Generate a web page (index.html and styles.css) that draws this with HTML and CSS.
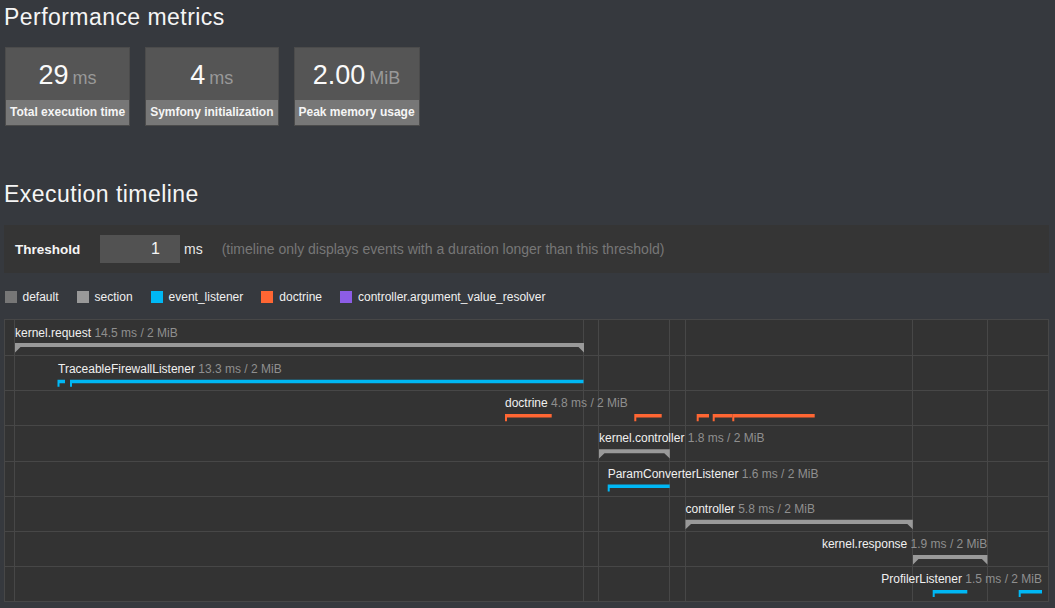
FILE: index.html
```html
<!DOCTYPE html>
<html lang="en">
<head>
<meta charset="utf-8">
<title>Performance metrics</title>
<link rel="stylesheet" href="styles.css">
</head>
<body>
<div class="page">
  <h2 class="title title-metrics">Performance metrics</h2>
  <div class="metrics">
    <div class="metric">
      <span class="value">29<span class="unit">ms</span></span>
      <span class="label">Total execution time</span>
    </div>
    <div class="metric">
      <span class="value">4<span class="unit">ms</span></span>
      <span class="label">Symfony initialization</span>
    </div>
    <div class="metric">
      <span class="value">2.00<span class="unit">MiB</span></span>
      <span class="label">Peak memory usage</span>
    </div>
  </div>

  <h2 class="title title-timeline">Execution timeline</h2>
  <form class="threshold">
    <label class="th-label" for="threshold">Threshold</label>
    <input class="th-input" id="threshold" type="text" value="1">
    <span class="th-unit">ms</span>
    <span class="th-help">(timeline only displays events with a duration longer than this threshold)</span>
  </form>

  <ul class="legend">
    <li class="legend-item"><span class="swatch sw-default"></span>default</li>
    <li class="legend-item"><span class="swatch sw-section"></span>section</li>
    <li class="legend-item"><span class="swatch sw-event"></span>event_listener</li>
    <li class="legend-item"><span class="swatch sw-doctrine"></span>doctrine</li>
    <li class="legend-item"><span class="swatch sw-resolver"></span>controller.argument_value_resolver</li>
  </ul>

  <svg class="timeline" width="1045" height="284" viewBox="4 319 1045 284" xmlns="http://www.w3.org/2000/svg">
    <rect class="tl-bg" x="4.5" y="319.5" width="1044" height="282"/>
    <g class="tl-grid">
      <line x1="4" y1="355.5" x2="1049" y2="355.5"/>
      <line x1="4" y1="390.5" x2="1049" y2="390.5"/>
      <line x1="4" y1="425.5" x2="1049" y2="425.5"/>
      <line x1="4" y1="461.5" x2="1049" y2="461.5"/>
      <line x1="4" y1="496.5" x2="1049" y2="496.5"/>
      <line x1="4" y1="531.5" x2="1049" y2="531.5"/>
      <line x1="4" y1="566.5" x2="1049" y2="566.5"/>
      <line x1="14.5" y1="319" x2="14.5" y2="602"/>
      <line x1="583.5" y1="319" x2="583.5" y2="602"/>
      <line x1="598.5" y1="319" x2="598.5" y2="602"/>
      <line x1="669.5" y1="319" x2="669.5" y2="602"/>
      <line x1="685.5" y1="319" x2="685.5" y2="602"/>
      <line x1="912.5" y1="319" x2="912.5" y2="602"/>
      <line x1="987.5" y1="319" x2="987.5" y2="602"/>
    </g>

    <!-- row 1: kernel.request -->
    <text class="tl-text" x="15" y="336.5"><tspan class="tl-name">kernel.request</tspan><tspan class="tl-dur"> 14.5 ms / 2 MiB</tspan></text>
    <polygon class="tl-section" points="15,343 584,343 584,352.5 578.5,347 20.5,347 15,352.5"/>

    <!-- row 2: TraceableFirewallListener -->
    <text class="tl-text" x="58" y="372.5"><tspan class="tl-name">TraceableFirewallListener</tspan><tspan class="tl-dur"> 13.3 ms / 2 MiB</tspan></text>
    <path class="tl-event" d="M57.5 379.7 H65 V383.3 H59.5 V386.8 H57.5 Z"/>
    <path class="tl-event" d="M70 379.7 H583.5 V383.3 H72 V386.8 H70 Z"/>

    <!-- row 3: doctrine -->
    <text class="tl-text" x="505" y="407"><tspan class="tl-name">doctrine</tspan><tspan class="tl-dur"> 4.8 ms / 2 MiB</tspan></text>
    <path class="tl-doctrine" d="M505 414 H551.7 V417.4 H507 V421.2 H505 Z"/>
    <path class="tl-doctrine" d="M634.3 414 H661.7 V417.4 H636.3 V421.2 H634.3 Z"/>
    <path class="tl-doctrine" d="M696.7 414 H709 V417.4 H698.7 V421.2 H696.7 Z"/>
    <path class="tl-doctrine" d="M712.7 414 H732.3 V417.4 H714.7 V421.2 H712.7 Z"/>
    <path class="tl-doctrine" d="M732.3 414 H814.7 V417.4 H734.3 V421.2 H732.3 Z"/>

    <!-- row 4: kernel.controller -->
    <text class="tl-text" x="599" y="442"><tspan class="tl-name">kernel.controller</tspan><tspan class="tl-dur"> 1.8 ms / 2 MiB</tspan></text>
    <polygon class="tl-section" points="599,449.3 669.8,449.3 669.8,458.6 664.3,453.3 604.5,453.3 599,458.6"/>

    <!-- row 5: ParamConverterListener -->
    <text class="tl-text" x="607.7" y="477.5"><tspan class="tl-name">ParamConverterListener</tspan><tspan class="tl-dur"> 1.6 ms / 2 MiB</tspan></text>
    <path class="tl-event" d="M607.7 484.5 H669.7 V487.9 H609.7 V491.6 H607.7 Z"/>

    <!-- row 6: controller -->
    <text class="tl-text" x="685.5" y="512.6"><tspan class="tl-name">controller</tspan><tspan class="tl-dur"> 5.8 ms / 2 MiB</tspan></text>
    <polygon class="tl-section" points="685.5,519.8 912.8,519.8 912.8,529.2 907.3,524 691,524 685.5,529.2"/>

    <!-- row 7: kernel.response -->
    <text class="tl-text tl-end" x="987.3" y="548"><tspan class="tl-name">kernel.response</tspan><tspan class="tl-dur"> 1.9 ms / 2 MiB</tspan></text>
    <polygon class="tl-section" points="913,555 987.4,555 987.4,564.4 981.9,559 918.5,559 913,564.4"/>

    <!-- row 8: ProfilerListener -->
    <text class="tl-text tl-end" x="1042" y="583"><tspan class="tl-name">ProfilerListener</tspan><tspan class="tl-dur"> 1.5 ms / 2 MiB</tspan></text>
    <path class="tl-event" d="M932.7 590 H967.3 V593.4 H934.7 V597 H932.7 Z"/>
    <path class="tl-event" d="M1018.7 590 H1042 V593.4 H1020.7 V597 H1018.7 Z"/>
  </svg>
</div>
</body>
</html>
```

FILE: styles.css
```css
* {
  box-sizing: border-box;
}

html,
body {
  margin: 0;
  background: #36393e;
}

body {
  font-family: "Liberation Sans", Arial, Helvetica, sans-serif;
  color: #f5f5f5;
}

.page {
  width: 1055px;
  padding: 0 6px 0 4px;
}

.title {
  margin: 0;
  font-size: 23px;
  font-weight: normal;
  line-height: 27px;
  color: #f5f5f5;
  letter-spacing: 0.45px;
}

.title-metrics {
  padding-top: 3.5px;
}

.title-timeline {
  margin-top: 55px;
}

/* metrics */
.metrics {
  display: flex;
  gap: 15px;
  margin: 16.5px 0 0 1px;
}

.metric {
  display: flex;
  flex-direction: column;
  border: 1px solid #4b4b4b;
  background: #555;
  text-align: center;
}

.value {
  display: block;
  height: 52px;
  padding-top: 9px;
  font-size: 27px;
  line-height: 36px;
  color: #fafafa;
  white-space: nowrap;
}

.unit {
  margin-left: 4px;
  font-size: 18px;
  color: #999;
}

.label {
  display: block;
  padding: 5px 4px;
  background: #777;
  font-size: 12px;
  font-weight: bold;
  line-height: 15px;
  color: #f5f5f5;
  white-space: nowrap;
}

/* threshold */
.threshold {
  display: flex;
  align-items: center;
  height: 48px;
  margin: 17px 0 0;
  padding: 0 11px;
  background: #353535;
}

.th-label {
  width: 85px;
  font-size: 13.5px;
  font-weight: bold;
  color: #f5f5f5;
}

.th-input {
  width: 80px;
  height: 28px;
  padding: 0 20px 0 0;
  border: 0;
  background: #525252;
  color: #f5f5f5;
  font-family: "Liberation Sans", Arial, sans-serif;
  font-size: 16px;
  text-align: right;
  outline: none;
}

.th-unit {
  margin-left: 4px;
  font-size: 14px;
  color: #e8e8e8;
}

.th-help {
  margin-left: 19px;
  font-size: 14px;
  color: #777;
}

/* legend */
.legend {
  display: flex;
  align-items: center;
  height: 12px;
  margin: 18px 0 0;
  padding: 0 0 0 0.5px;
  list-style: none;
}

.legend-item {
  display: flex;
  align-items: center;
  margin-right: 18px;
  font-size: 12px;
  line-height: 12px;
  color: #f0f0f0;
}

.swatch {
  display: inline-block;
  width: 12px;
  height: 12px;
  margin-right: 6px;
}

.sw-default { background: #777; }
.sw-section { background: #999; }
.sw-event { background: #00b8f5; }
.sw-doctrine { background: #ff6633; }
.sw-resolver { background: #8c5de6; }

/* timeline */
.timeline {
  display: block;
  margin-top: 16px;
}

.tl-bg {
  fill: #333;
  stroke: #474747;
  stroke-width: 1;
  shape-rendering: crispEdges;
}

.tl-grid line {
  stroke: #474747;
  stroke-width: 1;
  shape-rendering: crispEdges;
}

.tl-text {
  font-family: "Liberation Sans", Arial, sans-serif;
  font-size: 12px;
}

.tl-end {
  text-anchor: end;
}

.tl-name {
  fill: #f0f0f0;
}

.tl-dur {
  fill: #8f8f8f;
}

.tl-section {
  fill: #999;
}

.tl-event {
  fill: #00b8f5;
}

.tl-doctrine {
  fill: #ff6633;
}
```
